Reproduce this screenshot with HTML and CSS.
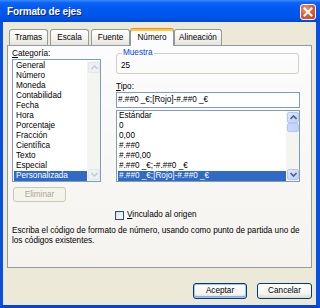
FILE: index.html
```html
<!DOCTYPE html>
<html>
<head>
<meta charset="utf-8">
<link rel="stylesheet" href="styles.css">
</head>
<body>
<div class="window">
  <div class="titlebar">
    <span class="title">Formato de ejes</span>
    <span class="close"><svg width="10" height="10" viewBox="0 0 10 10"><path d="M1.5 1.5 L8.5 8.5 M8.5 1.5 L1.5 8.5" stroke="#fff" stroke-width="2" stroke-linecap="square"/></svg></span>
  </div>
  <div class="frame">
    <div class="tabs">
      <div class="tab t1">Tramas</div>
      <div class="tab t2">Escala</div>
      <div class="tab t3">Fuente</div>
      <div class="tab sel">Número</div>
      <div class="tab t5">Alineación</div>
    </div>
    <div class="panel">
      <div class="cols">
        <div class="left">
          <div class="label"><u>C</u>ategoría:</div>
          <div class="list catlist">
            <div class="items">
              <div class="item">General</div>
              <div class="item">Número</div>
              <div class="item">Moneda</div>
              <div class="item">Contabilidad</div>
              <div class="item">Fecha</div>
              <div class="item">Hora</div>
              <div class="item">Porcentaje</div>
              <div class="item">Fracción</div>
              <div class="item">Científica</div>
              <div class="item">Texto</div>
              <div class="item">Especial</div>
              <div class="item selitem">Personalizada</div>
            </div>
            <div class="sbar disabled">
              <div class="sbtn"><svg width="7" height="5" viewBox="0 0 7 5"><path d="M0.5 4 L3.5 1 L6.5 4" fill="none" stroke="currentColor" stroke-width="1.6"/></svg></div>
              <div class="strack"></div>
              <div class="sbtn"><svg width="7" height="5" viewBox="0 0 7 5"><path d="M0.5 1 L3.5 4 L6.5 1" fill="none" stroke="currentColor" stroke-width="1.6"/></svg></div>
            </div>
          </div>
          <div class="btn disabledbtn">Eliminar</div>
        </div>
        <div class="right">
          <fieldset class="group">
            <legend>Muestra</legend>
            <div class="sample">25</div>
          </fieldset>
          <div class="label tipo"><u>T</u>ipo:</div>
          <div class="input">#.##0 _€;[Rojo]-#.##0 _€</div>
          <div class="list typelist">
            <div class="items">
              <div class="item">Estándar</div>
              <div class="item">0</div>
              <div class="item">0,00</div>
              <div class="item">#.##0</div>
              <div class="item">#.##0,00</div>
              <div class="item">#.##0 _€;-#.##0 _€</div>
              <div class="item selitem">#.##0 _€;[Rojo]-#.##0 _€</div>
            </div>
            <div class="sbar">
              <div class="sbtn"><svg width="7" height="5" viewBox="0 0 7 5"><path d="M0.5 4 L3.5 1 L6.5 4" fill="none" stroke="currentColor" stroke-width="1.6"/></svg></div>
              <div class="thumb"></div>
              <div class="strack"></div>
              <div class="sbtn"><svg width="7" height="5" viewBox="0 0 7 5"><path d="M0.5 1 L3.5 4 L6.5 1" fill="none" stroke="currentColor" stroke-width="1.6"/></svg></div>
            </div>
          </div>
        </div>
      </div>
      <div class="checkrow">
        <span class="checkbox"></span>
        <span class="checklabel"><u>V</u>inculado al origen</span>
      </div>
      <div class="desc">Escriba el código de formato de número, usando como punto de partida uno de<br>los códigos existentes.</div>
    </div>
    <div class="buttons">
      <div class="btn default">Aceptar</div>
      <div class="btn">Cancelar</div>
    </div>
  </div>
</div>
</body>
</html>
```
FILE: styles.css
```css
html, body {
  margin: 0;
  padding: 0;
  background: #fff;
}
body {
  font-family: "Liberation Sans", Arial, sans-serif;
  font-size: 8.2px;
  line-height: 10px;
  color: #000;
}
.window {
  width: 320px;
  height: 308px;
  display: flex;
  flex-direction: column;
  overflow: hidden;
}
.titlebar {
  height: 22px;
  flex: none;
  display: flex;
  align-items: center;
  justify-content: space-between;
  padding: 2px 4px 0 7px;
  box-sizing: border-box;
  background: linear-gradient(#3A8CFF 0%, #0D64F5 12%, #0058EE 40%, #0054E8 80%, #0049D0 100%);
}
.title {
  color: #fff;
  font-weight: bold;
  font-size: 10px;
  letter-spacing: -0.15px;
  text-shadow: 1px 1px 0 #0A1E80;
}
.close {
  width: 16px;
  height: 16px;
  box-sizing: border-box;
  border: 1px solid #fff;
  border-radius: 3px;
  background: radial-gradient(circle at 35% 30%, #F29A7C 0%, #E35F37 45%, #C8401A 100%);
  display: flex;
  align-items: center;
  justify-content: center;
}
.frame {
  flex: 1;
  display: flex;
  flex-direction: column;
  background: #ECE9D8;
  border-left: 3px solid #0850E0;
  border-right: 4px solid #0850E0;
  border-bottom: 3px solid #0844CC;
  padding: 6px 4px 0 4px;
}
.tabs {
  display: flex;
  align-items: flex-end;
  padding-left: 2px;
  height: 18px;
  margin-bottom: -1px;
  position: relative;
  z-index: 1;
}
.tab {
  height: 16px;
  box-sizing: border-box;
  border: 1px solid #919B9C;
  border-bottom: none;
  border-radius: 3px 3px 0 0;
  background: linear-gradient(#FFFFFF, #F3F2EE 60%, #E4E2DA);
  text-align: center;
  line-height: 15px;
  margin-right: 2px;
  margin-bottom: 1px;
  white-space: nowrap;
}
.t1, .t2, .t3 { width: 39px; }
.t5 { width: 48px; }
.tab.sel {
  width: 44px;
  height: 18px;
  margin-left: -2px;
  margin-right: 0;
  margin-bottom: 0;
  border-top: 1px solid #E68B2C;
  box-shadow: inset 0 2px 0 #FFC83C;
  background: #FCFCFE;
  line-height: 17px;
}
.panel {
  height: 223px;
  box-sizing: border-box;
  border: 1px solid #919B9C;
  background: linear-gradient(#FCFCFE, #F4F3EE);
  padding: 0 11px 0 4px;
  display: flex;
  flex-direction: column;
}
.cols {
  display: flex;
  gap: 15px;
}
.left {
  width: 89px;
  padding-top: 3px;
}
.right {
  width: 184px;
  padding-top: 2px;
}
.label u, .checklabel u { text-decoration: underline; }
.list {
  background: #fff;
  border: 1px solid #7F9DB9;
  display: flex;
  box-sizing: border-box;
}
.items {
  flex: 1;
  min-width: 0;
}
.item {
  height: 10px;
  white-space: nowrap;
}
.selitem {
  background: #316AC5;
  color: #fff;
}
.catlist {
  height: 123px;
  padding: 1px 0 0 1px;
}
.catlist .item { padding-left: 2px; }
.typelist {
  height: 72px;
  margin-top: 2px;
  padding-left: 1px;
}
.typelist .item { padding-left: 1px; }
.sbar {
  width: 13px;
  display: flex;
  flex-direction: column;
  background: #F4F4F0;
  padding: 1px 0 1px 1px;
  box-sizing: border-box;
}
.sbtn {
  height: 11px;
  flex: none;
  box-sizing: border-box;
  border: 1px solid #B6C8F0;
  border-radius: 2px;
  background: linear-gradient(135deg, #DCE8FE, #BDD0FA);
  color: #4D6185;
  display: flex;
  align-items: center;
  justify-content: center;
}
.thumb {
  height: 9px;
  flex: none;
  box-sizing: border-box;
  border: 1px solid #B6C8F0;
  border-radius: 2px;
  background: linear-gradient(90deg, #CADAFC, #C0D2FA);
}
.strack { flex: 1; }
.sbar.disabled .sbtn {
  border-color: #E3E6EE;
  background: #EEF0F4;
  color: #C8CCD4;
}
.btn {
  height: 16px;
  box-sizing: border-box;
  border: 1px solid #003C74;
  border-radius: 3px;
  background: linear-gradient(#FFFFFF, #F4F4F0 70%, #DCD8CC);
  text-align: center;
  line-height: 14px;
}
.disabledbtn {
  width: 53px;
  height: 15px;
  margin-top: 5px;
  margin-left: 1px;
  border-color: #C9C7BA;
  background: #F5F4EA;
  color: #ACA899;
  line-height: 13px;
}
.group {
  margin: 0;
  padding: 3px 4px 2px 4px;
  border: 1px solid #D0D0BF;
  border-radius: 3px;
  min-width: 0;
  width: 183px;
  box-sizing: border-box;
}
.group legend {
  padding: 0 1px;
  margin-left: 1px;
  color: #0046D5;
  line-height: 10px;
}
.sample { height: 10px; }
.tipo { margin-top: 8px; }
.input {
  height: 16px;
  box-sizing: border-box;
  border: 1px solid #7F9DB9;
  background: #fff;
  padding-left: 1px;
  line-height: 14px;
  white-space: nowrap;
}
.checkrow {
  display: flex;
  align-items: center;
  margin-top: 8px;
  margin-left: 103px;
  height: 10px;
}
.checkbox {
  width: 9px;
  height: 9px;
  box-sizing: border-box;
  border: 1px solid #1C5180;
  background: linear-gradient(135deg, #DCDCD7, #FFFFFF);
  margin-right: 3px;
}
.desc {
  margin-top: 6px;
  white-space: nowrap;
}
.buttons {
  display: flex;
  justify-content: flex-end;
  gap: 10px;
  margin-top: 15px;
}
.buttons .btn { width: 54px; }
.buttons .btn + .btn { width: 55px; }
.default {
  box-shadow: inset 0 0 0 1px #A9C4F2, inset 0 -1px 0 1px #89ADE4;
}
```
